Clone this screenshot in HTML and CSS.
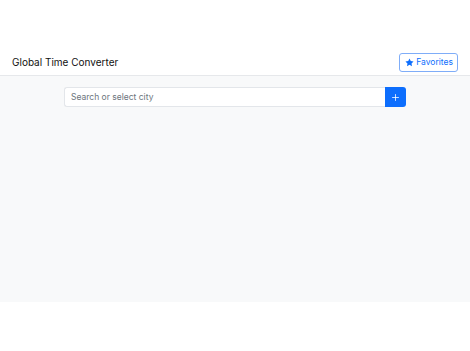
FILE: index.html
```html
<!DOCTYPE html>
<html lang="en">
<head>
  <meta charset="UTF-8">
  <title>Global Time Converter</title>
  <link rel="stylesheet" href="styles.css">
</head>
<body>
<header class="topbar">
  <h1 class="title">Global Time Converter</h1>
  <button class="fav-btn">
    <svg class="star" viewBox="0 0 16 16" width="9" height="9"><path fill="currentColor" d="M8 .8l2.2 4.6 5 .7-3.6 3.5.9 5L8 12.2 3.5 14.6l.9-5L.8 6.1l5-.7z"/></svg>
    Favorites
  </button>
</header>

<main class="content">
  <div class="search-group">
    <input class="search-input" type="text" placeholder="Search or select city">
    <button class="add-btn">
      <svg viewBox="0 0 16 16" width="9" height="9"><path d="M8 2v12M2 8h12" stroke="currentColor" stroke-width="1.4" fill="none"/></svg>
    </button>
  </div>
</main>
</body>
</html>
```
FILE: styles.css
```css
body {
  margin: 0;
  font-family: Inter, "Noto Sans", sans-serif;
  background-color: #ffffff;
  color: #212529;
}

.topbar {
  height: 76px;
  padding: 49px 12px 0;
  display: flex;
  align-items: center;
  justify-content: space-between;
  border-bottom: 1px solid #e6e8eb;
  background-color: #ffffff;
  box-sizing: border-box;
}

.title {
  margin: 0;
  font-size: 10px;
  font-weight: 400;
  color: #111;
}

.fav-btn {
  height: 19px;
  padding: 0 4px 0 5px;
  display: flex;
  align-items: center;
  gap: 2px;
  font-family: inherit;
  font-size: 8.5px;
  color: #0d6efd;
  background: #fff;
  border: 1px solid #7fadf8;
  border-radius: 3px;
}

.content {
  height: 226px;
  background-color: #f8f9fa;
  padding-top: 11px;
  box-sizing: border-box;
  display: flex;
  justify-content: center;
}

.search-group {
  width: 342px;
  height: 20px;
  display: flex;
}

.search-input {
  flex: 1;
  min-width: 0;
  margin: 0;
  padding: 0 6px;
  font-family: inherit;
  font-size: 8.5px;
  color: #212529;
  background: #fff;
  border: 1px solid #e3e6ea;
  border-right: none;
  border-radius: 3px 0 0 3px;
  outline: none;
}

.search-input::placeholder {
  color: #6c757d;
}

.add-btn {
  width: 21px;
  padding: 0;
  display: flex;
  align-items: center;
  justify-content: center;
  color: #fff;
  background-color: #0d6efd;
  border: none;
  border-radius: 0 3px 3px 0;
}
```
